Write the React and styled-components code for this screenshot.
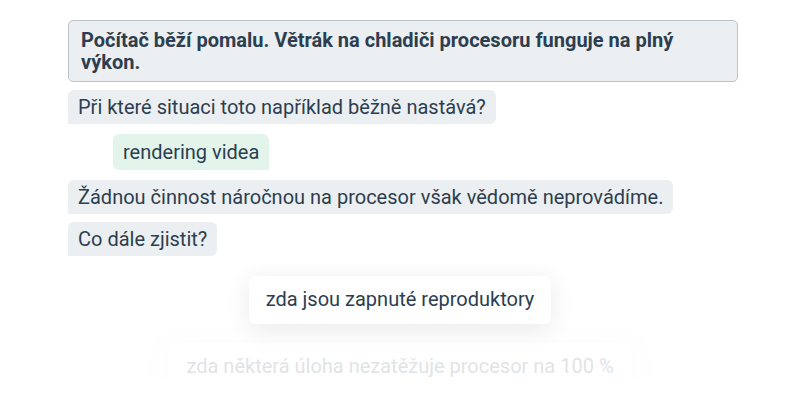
import React from 'react';
import styled, { createGlobalStyle } from 'styled-components';

const GlobalStyle = createGlobalStyle`
  body {
    margin: 0;
    background: #ffffff;
    font-family: Roboto, "Noto Sans", sans-serif;
    color: #2c3e50;
  }
`;

const Page = styled.div`
  width: 800px;
  height: 400px;
  overflow: hidden;
  padding-top: 20px;
  box-sizing: border-box;
`;

const Chat = styled.div`
  width: 670px;
  margin-left: 68px;
  display: flex;
  flex-direction: column;
  align-items: flex-start;
`;

const Question = styled.div`
  align-self: stretch;
  background: #eceff1;
  border: 1px solid #bcc2c7;
  border-radius: 5px;
  padding: 8px 12px;
  font-size: 20px;
  font-weight: 700;
  line-height: 22px;
`;

const Bubble = styled.div`
  background: ${p => (p.$user ? '#e3f5eb' : '#eceff1')};
  border-radius: ${p => (p.$user ? '6px 6px 0 6px' : '6px 6px 6px 0')};
  padding: ${p => (p.$user ? '7px 10px' : '6px 10px')};
  margin-top: ${p => p.$gap || 8}px;
  margin-left: ${p => (p.$user ? '45px' : '0')};
  font-size: 20px;
  line-height: 22px;
`;

const Options = styled.div`
  margin-top: 8px;
  height: 114px;
  overflow: hidden;
  padding-top: 12px;
  box-sizing: border-box;
  display: flex;
  flex-direction: column;
  align-items: center;
  gap: 19px;
`;

const Option = styled.div`
  background: #ffffff;
  border-radius: 6px;
  padding: 12px 17px 13px;
  font-size: 20px;
  line-height: 23px;
  box-shadow: 0 4px 26px rgba(0, 0, 0, 0.09);
  opacity: ${p => p.$fade || 1};
  flex-shrink: 0;
`;

export default function App() {
  return (
    <Page>
      <GlobalStyle />
      <Chat>
        <Question>
          Počítač běží pomalu. Větrák na chladiči procesoru funguje na plný výkon.
        </Question>
        <Bubble>Při které situaci toto například běžně nastává?</Bubble>
        <Bubble $user $gap={10}>rendering videa</Bubble>
        <Bubble $gap={10}>Žádnou činnost náročnou na procesor však vědomě neprovádíme.</Bubble>
        <Bubble $gap={8}>Co dále zjistit?</Bubble>
      </Chat>
      <Options>
        <Option>zda jsou zapnuté reproduktory</Option>
        <Option $fade={0.14}>zda některá úloha nezatěžuje procesor na 100 %</Option>
      </Options>
    </Page>
  );
}
